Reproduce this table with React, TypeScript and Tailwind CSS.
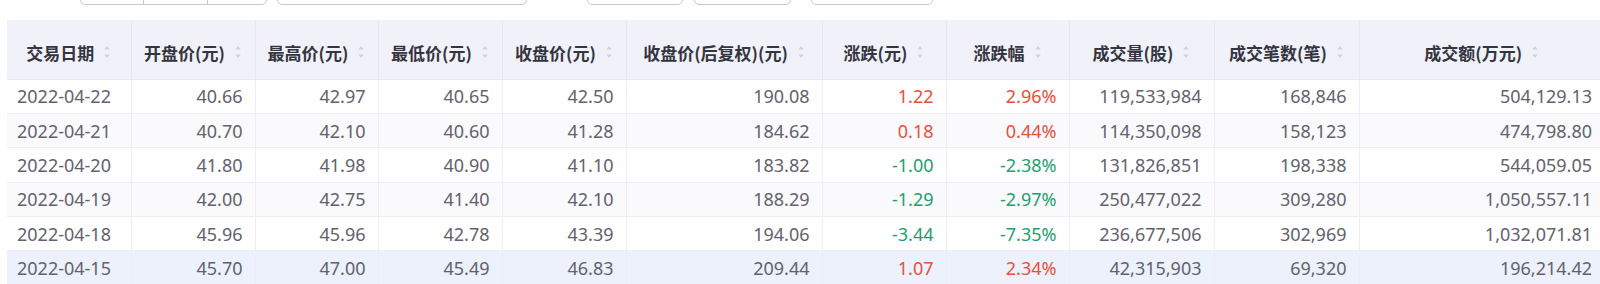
import React from "react";

const cols = [
  { title: "交易日期", w: 124 },
  { title: "开盘价(元)", w: 124 },
  { title: "最高价(元)", w: 123 },
  { title: "最低价(元)", w: 124 },
  { title: "收盘价(元)", w: 124 },
  { title: "收盘价(后复权)(元)", w: 196 },
  { title: "涨跌(元)", w: 124 },
  { title: "涨跌幅", w: 123 },
  { title: "成交量(股)", w: 145 },
  { title: "成交笔数(笔)", w: 145 },
  { title: "成交额(万元)", w: 245 },
];

const rows = [
  ["2022-04-22", "40.66", "42.97", "40.65", "42.50", "190.08", "1.22", "2.96%", "119,533,984", "168,846", "504,129.13"],
  ["2022-04-21", "40.70", "42.10", "40.60", "41.28", "184.62", "0.18", "0.44%", "114,350,098", "158,123", "474,798.80"],
  ["2022-04-20", "41.80", "41.98", "40.90", "41.10", "183.82", "-1.00", "-2.38%", "131,826,851", "198,338", "544,059.05"],
  ["2022-04-19", "42.00", "42.75", "41.40", "42.10", "188.29", "-1.29", "-2.97%", "250,477,022", "309,280", "1,050,557.11"],
  ["2022-04-18", "45.96", "45.96", "42.78", "43.39", "194.06", "-3.44", "-7.35%", "236,677,506", "302,969", "1,032,071.81"],
  ["2022-04-15", "45.70", "47.00", "45.49", "46.83", "209.44", "1.07", "2.34%", "42,315,903", "69,320", "196,214.42"],
];

function SortCaret() {
  return (
    <svg width="8" height="16" viewBox="0 0 8 16" className="ml-[9px] shrink-0">
      <path d="M4 2 L6.8 5.5 L1.2 5.5 Z" fill="#d0d3da" />
      <path d="M4 14 L6.8 10.5 L1.2 10.5 Z" fill="#d0d3da" />
    </svg>
  );
}

function rowBg(i: number) {
  if (i === 5) return "bg-[#ecf1fc]";
  return i % 2 === 1 ? "bg-[#fafafc]" : "bg-white";
}

function cellColor(ci: number, v: string) {
  if (ci === 6 || ci === 7) return v.startsWith("-") ? "text-[#23a06c]" : "text-[#e8503a]";
  return "text-[#62626e]";
}

export default function App() {
  return (
    <main className="h-[284px] w-[1600px] overflow-hidden bg-white font-['Noto_Sans','Noto_Sans_CJK_SC',sans-serif]">
      {/* filter controls, scrolled mostly out of view */}
      <div className="flex h-[36px] -mt-[31px] mb-[15px] items-stretch">
        <div className="ml-[80px] flex w-[187px] rounded-[5px] border border-[#c6c8cf]">
          <div className="w-[63px] border-r border-[#c6c8cf]" />
          <div className="w-[64px] border-r border-[#c6c8cf]" />
          <div className="flex-1" />
        </div>
        <div className="ml-[10px] w-[250px] rounded-[5px] border border-[#c6c8cf]" />
        <div className="ml-[60px] w-[96px] rounded-[5px] border border-[#c6c8cf]" />
        <div className="ml-[11px] w-[97px] rounded-[5px] border border-[#c6c8cf]" />
        <div className="ml-[20px] w-[122px] rounded-[5px] border border-[#c6c8cf]" />
      </div>

      <div className="pl-[7px]">
        <table className="table-fixed border-collapse w-[1597px]">
          <colgroup>
            {cols.map((c) => (
              <col key={c.title} style={{ width: c.w }} />
            ))}
          </colgroup>
          <thead>
            <tr className="h-[59px] bg-[#f0f1f9]">
              {cols.map((c, ci) => (
                <th
                  key={c.title}
                  className={`border-b border-[#e6e8f0] p-0 ${ci < cols.length - 1 ? "border-r" : ""}`}
                >
                  <div className="flex items-center justify-center pt-[6px] font-['Noto_Sans_CJK_SC',sans-serif] text-[17px] font-bold text-[#35353f]">
                    <span>{c.title}</span>
                    <SortCaret />
                  </div>
                </th>
              ))}
            </tr>
          </thead>
          <tbody>
            {rows.map((r, ri) => (
              <tr key={r[0]} className={`h-[34.4px] ${rowBg(ri)}`}>
                {r.map((v, ci) => (
                  <td
                    key={ci}
                    className={`border-b border-[#eceef4] p-0 text-[18px] leading-none ${ci < r.length - 1 ? "border-r" : ""} ${
                      ci === 0 ? "pl-[10px] text-left" : "pr-[12px] text-right"
                    } ${cellColor(ci, v)}`}
                  >
                    {v}
                  </td>
                ))}
              </tr>
            ))}
          </tbody>
        </table>
      </div>
    </main>
  );
}
